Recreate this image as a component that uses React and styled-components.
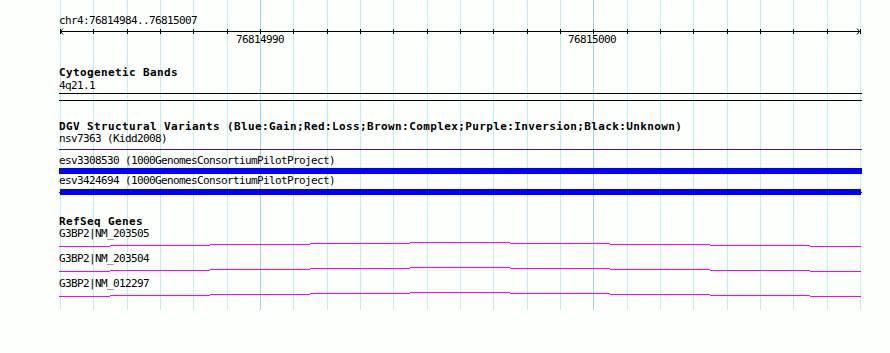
import React from 'react';
import styled, { createGlobalStyle } from 'styled-components';

const GlobalStyle = createGlobalStyle`
  html, body {
    margin: 0;
    padding: 0;
    background: #fdfffd;
  }
  body {
    font-family: 'DejaVu Sans Mono', 'Liberation Mono', monospace;
    color: #000;
  }
`;

// view: chr4:76814984..76815007, 24 bases over 800px starting at x=60
const BASES = 24;
const LEFT = 60;
const PX_PER_BASE = 800 / BASES;
const ORIGIN = 59; // left edge of the track column
const baseX = (i) => Math.round(LEFT + i * PX_PER_BASE);
const MAJOR = [6, 16];

const TICK_LABELS = [
  { text: '76814990', left: 236 },
  { text: '76815000', left: 568 },
];

// exon/intron steps of the gene glyph, x in track coords, y offset in px
const GENE_STEPS = [
  [0, 51, 6], [51, 151, 5], [151, 251, 4], [251, 351, 3], [351, 451, 2],
  [451, 551, 3], [551, 651, 4], [651, 751, 5], [751, 802, 6],
];

const GENES = ['G3BP2|NM_203505', 'G3BP2|NM_203504', 'G3BP2|NM_012297'];

const View = styled.div`
  position: relative;
  width: 890px;
  height: 353px;
  overflow: hidden;
`;

const Grid = styled.svg`
  position: absolute;
  left: 0;
  top: 0;
`;

const Tracks = styled.div`
  position: relative;
  display: flex;
  flex-direction: column;
  width: 803px;
  padding: 15px 0 0 ${ORIGIN}px;
`;

const Label = styled.div`
  font-size: 11px;
  letter-spacing: -0.62px;
  line-height: 12px;
  height: 12px;
  white-space: nowrap;
  margin-top: ${(p) => p.$mt || 0}px;
`;

const Title = styled.div`
  font-size: 11px;
  font-weight: bold;
  letter-spacing: 0.38px;
  line-height: 12px;
  height: 12px;
  white-space: nowrap;
  margin-top: ${(p) => p.$mt || 0}px;
`;

const Rule = styled.div`
  height: 1px;
  background: ${(p) => p.$color || '#000'};
  margin-top: ${(p) => p.$mt || 0}px;
`;

const BarTrack = styled.div`
  display: flex;
  height: 6px;
  padding: 0 ${(p) => p.$inset || 0}px;
  margin-top: ${(p) => p.$mt || 0}px;
  background: linear-gradient(#0000ff, #0000ff) center / 100% 1px no-repeat;
`;

const Bar = styled.div`
  flex: 1;
  background: #0000ff;
`;

const Ruler = styled.div`
  position: relative;
  height: 20px;
`;

const Axis = styled.svg`
  display: block;
`;

const TickLabel = styled.span`
  position: absolute;
  top: 7px;
  font-size: 11px;
  letter-spacing: -0.62px;
  line-height: 12px;
  white-space: nowrap;
`;

const GeneList = styled.div`
  display: flex;
  flex-direction: column;
`;

const GeneGlyph = styled.svg`
  display: block;
`;

const GridLines = () => (
  <Grid width="890" height="310" shapeRendering="crispEdges">
    {Array.from({ length: BASES + 1 }, (_, i) => (
      <rect
        key={i}
        x={baseX(i)}
        y="0"
        width="1"
        height="310"
        fill={MAJOR.includes(i) ? '#9dd4e8' : '#bdeef1'}
      />
    ))}
  </Grid>
);

const ScaleBar = () => (
  <Ruler>
    <Axis width="803" height="20" shapeRendering="crispEdges">
      <rect x={LEFT - ORIGIN} y="4" width="801" height="1" fill="#000" />
      {Array.from({ length: BASES + 1 }, (_, i) => (
        <rect key={i} x={baseX(i) - ORIGIN} y="2" width="1" height="5" fill="#000" />
      ))}
      <polyline points="4,1.5 1.5,4.5 4,7.5" fill="none" stroke="#000" strokeWidth="1" shapeRendering="auto" />
      <polyline points="798,1.5 800.5,4.5 798,7.5" fill="none" stroke="#000" strokeWidth="1" shapeRendering="auto" />
    </Axis>
    {TICK_LABELS.map((t) => (
      <TickLabel key={t.text} style={{ left: t.left - ORIGIN }}>
        {t.text}
      </TickLabel>
    ))}
  </Ruler>
);

const Gene = ({ name }) => (
  <>
    <Label>{name}</Label>
    <GeneGlyph width="803" height="13" shapeRendering="crispEdges">
      {GENE_STEPS.map(([x0, x1, y]) => (
        <rect key={x0} x={x0} y={y} width={x1 - x0} height="1" fill="#ff00ff" />
      ))}
    </GeneGlyph>
  </>
);

export default function App() {
  return (
    <View>
      <GlobalStyle />
      <GridLines />
      <Tracks>
        <Label>chr4:76814984..76815007</Label>
        <ScaleBar />

        <Title $mt={20}>Cytogenetic Bands</Title>
        <Label $mt={1}>4q21.1</Label>
        <Rule $mt={1} />
        <Rule $mt={6} />

        <Title $mt={20}>
          DGV Structural Variants (Blue:Gain;Red:Loss;Brown:Complex;Purple:Inversion;Black:Unknown)
        </Title>
        <Label>nsv7363 (Kidd2008)</Label>
        <Rule $mt={4} $color="#4a1370" />
        <Label $mt={5}>esv3308530 (1000GenomesConsortiumPilotProject)</Label>
        <BarTrack $mt={1}>
          <Bar />
        </BarTrack>
        <Label $mt={1}>esv3424694 (1000GenomesConsortiumPilotProject)</Label>
        <BarTrack $mt={2} $inset={1}>
          <Bar />
        </BarTrack>

        <Title $mt={21}>RefSeq Genes</Title>
        <GeneList>
          {GENES.map((g) => (
            <Gene key={g} name={g} />
          ))}
        </GeneList>
      </Tracks>
    </View>
  );
}
